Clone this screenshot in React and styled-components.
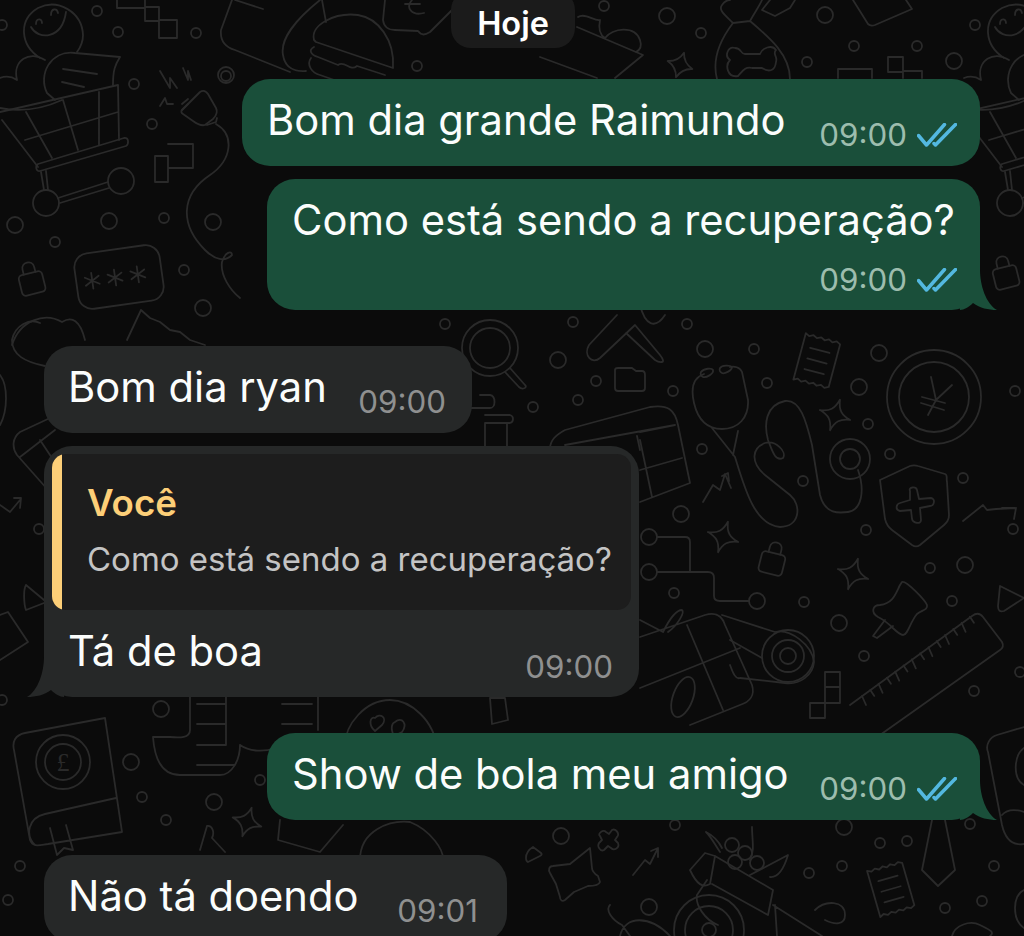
import React from 'react';
import styled, {createGlobalStyle} from 'styled-components';

const GlobalStyle = createGlobalStyle`
  html, body {
    margin: 0;
    padding: 0;
    background: #0b0b0b;
  }
  * {
    box-sizing: border-box;
  }
`;

// pattern of the chat wallpaper, one list per kind of mark
const smallDots = [
  [97,11],[118,32],[2,25],[196,33],[134,84],[226,76],[152,124],[164,218],[55,242],[184,270],
  [604,6],[701,33],[807,62],[854,46],[917,46],[975,25],[417,66],[445,324],[573,322],[687,324],
  [596,381],[578,400],[533,407],[754,349],[767,383],[673,391],[702,449],[868,424],[890,454],
  [803,481],[866,530],[963,478],[1015,391],[1013,529],[930,568],[674,593],[804,602],[952,601],
  [864,656],[974,691],[1020,672],[39,529],[2,700],[142,797],[166,820],[20,866],[8,900],[260,780],
  [880,843],[907,841],[842,866],[809,873],[970,824],[994,866],[982,901],[945,908],[675,825],
];
const bigDots = [
  [15,225],[109,221],[213,222],[203,308],[667,16],[825,15],[954,61],[558,360],[705,349],[879,353],
  [859,387],[681,514],[965,565],[839,623],[161,709],[131,762],[214,802],[561,836],[844,827],[649,907],
  [226,75],
];

const Cart = () => (
  <g>
    <path d="M40 58C20 45 18 20 38 8C58-2 82 12 83 35C83 42 80 48 77 52" />
    <path d="M31 27C38 40 62 40 66 12M36 24C36 18 42 18 42 23M51 15C51 8 57 8 58 13" />
    <path d="M0 78C8 75 14 78 17 80C12 60 30 50 45 60M0 108C20 112 40 110 62 100" />
    <path d="M120 57L75 53C50 50 38 75 47 93L55 100M120 57C115 65 113 70 113 85M63 69L97 74M62 82L84 87" />
    <path d="M0 112L118 85L119 140M2 120L38 167M26 112L52 158M63 100L78 150M99 92L99 145M25 140L118 112" />
    <path d="M38 164L124 138C129 137 129 144 126 146L40 171C36 172 35 166 38 164Z" />
    <path d="M41 172L44 190M46 171L48 190M58 198L108 182M60 203L109 188" />
    <circle cx="46" cy="203" r="13" />
    <circle cx="121" cy="181" r="13" />
  </g>
);

const Sparkle = ({x, y, r = 15}) => (
  <path d={`M${x} ${y - r}C${x + 2} ${y - 6} ${x + 6} ${y - 2} ${x + r} ${y}C${x + 6} ${y + 2} ${x + 2} ${y + 6} ${x} ${y + r}C${x - 2} ${y + 6} ${x - 6} ${y + 2} ${x - r} ${y}C${x - 6} ${y - 2} ${x - 2} ${y - 6} ${x} ${y - r}Z`} transform={`rotate(18 ${x} ${y})`} />
);

const Lock = ({x, y, angle = -14}) => (
  <g transform={`translate(${x} ${y}) rotate(${angle})`}>
    <rect x="-12" y="-10" width="24" height="21" rx="4" />
    <path d="M-6-10V-15C-6-23 6-23 6-15V-10" />
  </g>
);

const Receipt = ({x, y, angle = 15}) => (
  <g transform={`translate(${x} ${y}) rotate(${angle})`}>
    <path d="M-18-24L-14-22L-10-24L-6-22L-2-24L2-22L6-24L10-22L14-24L18-22V22L14 24L10 22L6 24L2 22L-2 24L-6 22L-10 24L-14 22L-18 24Z" />
    <path d="M-10-11H10M-10 0H10M-10 11H10" />
  </g>
);

const Wallpaper = () => (
  <PatternSvg viewBox="0 0 1024 936" aria-hidden="true">
    {smallDots.map(([x, y]) => <circle key={`${x}-${y}`} cx={x} cy={y} r="5" />)}
    {bigDots.map(([x, y]) => <circle key={`${x}-${y}`} cx={x} cy={y} r="8" />)}
    <Cart />
    <g transform="translate(964 0)"><Cart /></g>

    {/* plug and cable */}
    <path d="M182 110L200 92C203 90 206 91 208 94L216 108C218 112 216 116 213 119L205 125C201 126 197 124 193 121L183 114C181 113 181 111 182 110Z" />
    <path d="M207 125L216 122L217 118M182 110L188 104M188 99L182 104M216 124C235 135 232 160 210 175C180 195 180 225 205 250C215 260 225 262 232 255C232 250 225 252 222 262C220 275 230 290 240 298" />
    <path d="M160 71L170 88L170 78L177 88M183 68L188 80L188 71L191 80M160 106L165 98L167 104L173 104" />

    {/* squares */}
    <path d="M117 0V8H145V21H159V38H177V20H159V7H145V0M168 144H193V168H168V156H155V182H168V168" />
    <path d="M888 57H903V72H888ZM903 71H922V78M903 72V78M838 78V69H872V78" />
    <path d="M825 672H840V703H825ZM825 687H840M810 703H825V718H810Z" />

    <g transform="translate(119 277) rotate(-8)">
      <rect x="-43" y="-28" width="86" height="56" rx="14" />
      <path d="M-27-8V8M-34-4L-20 4M-34 4L-20-4M-4-8V8M-11-4L3 4M-11 4L3-4M19-8V8M12-4L26 4M12 4L26-4" />
    </g>
    <Lock x={32} y={283} />
    <Lock x={1006} y={277} />
    <Lock x={772} y={563} angle={14} />

    {/* torn paper under the last outgoing bubble */}
    <path d="M127 340L141 310L150 318L160 322L170 330L180 332L190 340L205 345" />
    <path d="M12 345C20 320 45 312 62 322C72 316 80 320 85 340" />

    {/* left edge */}
    <path d="M40 323C30 318 15 325 12 340C12 355 25 362 45 366M0 375C8 385 8 410 0 425M50 418L20 432C12 438 12 448 17 455L48 490M20 457L55 430M40 440L60 470" />
    <path d="M0 505L10 512L20 500M14 498H21L20 508M26 585L44 600M26 585C23 590 24 605 26 610L44 603M0 615L8 612L28 642L0 660" />

    {/* top row */}
    <path d="M314 40C310 25 335 12 358 15C378 18 395 40 393 68L316 42ZM314 47C308 50 311 55 318 57L338 65C345 60 350 72 357 66L385 75M311 58C306 65 312 73 320 75L380 96" />
    <path d="M320 0C295 20 280 40 283 55C285 68 295 72 306 71M232 0L221 30C220 40 225 47 235 50L290 72M235 0L263 9M322 0L326 22" />
    <path d="M385 0L383 20C384 28 390 30 395 30L418 31C422 36 425 35 430 32L460 2M412 0C405 8 412 16 424 13M405 4H420" />
    <path d="M577 27L643 55L615 78M540 57L597 78M578 17C585 12 595 22 600 20C598 30 600 35 605 38C612 28 635 25 640 40C642 46 640 50 636 52" />
    <path d="M733 23C720 40 712 60 717 79M750 21C770 38 790 55 790 79M733 23L750 21M733 23C725 15 718 10 722 5C724 2 726 0 730 0M750 21C755 12 760 5 762 0" />
    <path d="M735 48C728 46 724 56 730 60C725 65 727 78 738 76C742 72 745 66 752 68H762C768 72 775 72 776 62C778 56 772 54 776 50C772 44 762 48 760 54H745C740 54 742 48 735 48Z" />
    <Sparkle x={680} y={65} r={13} />
    <path d="M853 0L868 24C870 26 872 26 875 25L912 9L906 0M770 0L762 10L775 16L790 8L795 0" />

    {/* middle */}
    <circle cx="490" cy="348" r="28" />
    <circle cx="490" cy="348" r="20" />
    <path d="M510 368L525 385C528 388 522 390 519 387L505 372" />
    <path d="M617 315L589 345C583 355 592 365 600 358L635 325L660 355C668 365 658 362 655 360L626 333M640 305C645 325 655 330 665 315" />
    <path d="M618 368H632L636 371H642C644 371 645 373 645 375V388C645 390 644 391 642 391H618C616 391 615 390 615 388V370C615 369 616 368 618 368Z" />
    <path d="M550 449C550 440 556 435 565 430L650 407C668 404 675 410 678 425L690 483L640 502M565 445L675 425M640 432L675 425M640 470L682 458M652 497L640 440M637 436L640 450" />
    <path d="M480 395H490C496 396 496 408 490 408H470M485 415H510C514 416 514 422 510 423H485M485 423V446M507 423V446" />

    {/* stethoscope */}
    <path d="M704 374C692 378 691 390 694 403C698 420 708 429 722 429C738 429 749 418 748 400L742 372C740 367 734 366 730 367M712 428L735 457M738 431L733 455M735 457C745 490 755 525 780 527C800 527 802 505 790 495L765 475C750 462 752 448 765 443C776 440 787 452 783 458C775 462 772 450 768 440C764 425 765 405 785 401C800 399 806 420 812 445L820 495C825 515 840 513 848 512C862 510 865 490 858 470" />
    <path d="M701 372C704 368 712 368 713 370C714 374 706 378 703 377C701 376 700 374 701 372ZM720 368C722 365 730 365 732 367C732 371 724 374 722 373C720 372 719 370 720 368Z" />
    <circle cx="850" cy="459" r="20" />
    <circle cx="850" cy="459" r="10" />

    <Receipt x={817} y={361} />
    <Receipt x={891} y={889} angle={-16} />

    {/* yen coin */}
    <circle cx="934" cy="397" r="47" />
    <circle cx="934" cy="397" r="35" />
    <path d="M931 377L936 400L928 415M952 385L936 400M922 397L945 403M921 403L944 410" />

    {/* shield */}
    <path d="M880 480L910 466C913 465 915 465 918 466L945 474C948 475 946 478 947 482L949 515C949 520 947 522 944 525L920 545C917 547 915 547 912 545L892 530C888 527 886 523 885 519L880 480Z" />
    <path d="M910 491C908 487 916 486 917 490L919 499L931 498C936 499 934 506 930 506L920 508L921 520C921 525 913 523 912 519L911 510L900 511C895 510 896 504 900 503L910 500Z" />
    <path d="M963 521L983 505L987 510L996 509L1015 508L1002 508M1016 508L1014 519" />
    <path d="M703 502L713 485L720 490L725 474L731 488M722 476L728 473L729 481" />
    <Sparkle x={835} y={415} r={16} />
    <Sparkle x={723} y={537} r={16} />
    <Sparkle x={853} y={574} r={16} />
    <Sparkle x={247} y={822} r={15} />

    {/* circuit */}
    <circle cx="649" cy="537" r="8" />
    <circle cx="649" cy="572" r="8" />
    <circle cx="757" cy="601" r="8" />
    <path d="M657 537H685C688 537 690 539 690 542V572M657 572H708C712 572 714 574 714 578V596C714 599 716 601 720 601H749" />

    {/* pin */}
    <path d="M902 582C906 580 925 600 927 605C928 610 922 610 917 614C910 622 908 635 903 635C897 635 890 622 878 617C870 612 873 605 880 605C893 603 895 595 900 585ZM885 620L873 636L877 638L893 626" />
    <path d="M1000 586L1024 598L1004 611C1000 612 998 611 998 606Z" />

    {/* ruler */}
    <path d="M850 705L972 616C976 613 980 613 983 617L1002 642C1004 646 1003 648 1000 650L880 735" />
    {Array.from({length: 14}, (_, i) => {
      const x = 862 + i * 8.3;
      const y = 696 - i * 6.1;
      return <path key={i} d={`M${x} ${y}L${x + 4} ${y + (i % 2 ? 6 : 9)}`} />;
    })}

    {/* gift and tape */}
    <path d="M640 637L705 615C715 612 722 615 725 625L752 685C755 695 750 702 740 705L690 725M687 625L723 710M640 688L740 648M663 632C668 622 675 610 682 610C685 612 678 625 668 632M640 620L663 632" />
    <ellipse cx="683" cy="697" rx="10" ry="21" transform="rotate(20 683 697)" />
    <path d="M722 615L775 632C790 628 812 645 814 662C813 675 800 685 785 683L740 678C735 680 732 670 730 665M730 640L762 658" />
    <circle cx="788" cy="656" r="26" />
    <circle cx="788" cy="656" r="16" />
    <circle cx="788" cy="656" r="8" />

    {/* book */}
    <path d="M105 718L25 733C15 735 12 742 14 750L30 840C33 848 40 845 48 844L122 832L105 718ZM116 798L45 814C28 818 25 835 35 845M50 828L57 855L64 848L73 850L66 825" />
    <circle cx="63" cy="762" r="27" />
    <circle cx="63" cy="762" r="18" />
    <PoundMark x="63" y="771">£</PoundMark>

    {/* scroll */}
    <path d="M153 737C155 765 165 775 180 775H220C232 775 240 760 240 745M190 697V730C190 738 180 738 170 737H153M197 704H225M197 724H225M197 745H225M197 765H235M226 697V745M282 704H312M282 724H312M318 697V730M240 745C250 752 265 752 275 748" />
    <path d="M345 745C345 725 365 700 390 700C410 700 435 720 437 750M375 718C380 712 388 718 382 725L375 731C368 725 370 716 375 718ZM395 722C402 716 408 724 402 732L394 736C390 728 392 723 395 722Z" />
    <path d="M490 698H505L508 720L492 724Z" />
    <path d="M280 820L278 840L320 852L343 825M360 860C360 830 390 820 410 822C430 830 445 850 443 862M200 850L207 826C212 825 215 832 212 838L225 852" />

    {/* star, arrow and barrow */}
    <path d="M590 848L592 868C592 872 595 874 598 876L600 882C599 885 594 886 588 886L574 892L565 900C562 902 560 900 560 897L556 884L550 873C548 870 549 866 553 866L570 864Z" />
    <path d="M533 847L541 853C542 854 542 855 540 856L528 862C527 862 526 860 526 858C526 854 528 850 533 847Z" />
    <path d="M600 836C597 834 603 829 606 832L609 834L612 830C616 828 620 834 617 837L615 840L618 843C620 848 614 851 611 848L608 846L604 850C600 852 597 846 599 843L602 840Z" />
    <path d="M633 875L645 860L650 864L657 850M651 851L658 848L658 857" />
    <path d="M690 870L705 853L715 856L710 884C703 888 697 885 690 870ZM715 856L773 890L768 915L712 884M707 880L697 895C695 905 705 920 718 925M720 852C715 845 712 838 706 832C712 835 718 840 722 848M750 860C755 850 752 840 752 827M770 877C780 878 785 865 788 855L750 875" />
    <circle cx="732" cy="845" r="7" />
    <circle cx="745" cy="853" r="7" />
    <circle cx="757" cy="863" r="7" />
    <circle cx="735" cy="862" r="7" />
    <circle cx="709" cy="930" r="35" />
    <circle cx="709" cy="930" r="24" />
    <circle cx="709" cy="930" r="7" />
    <path d="M773 905L822 936M775 905L777 936M815 910C825 900 845 900 845 915C845 925 835 925 825 920M620 936C625 915 650 915 670 936M610 905C605 910 612 920 622 925L630 936" />

    {/* tie and right book */}
    <path d="M932 820L922 870L938 886L955 870L945 820" />
    <path d="M1024 727L997 735C990 737 985 745 988 752L1002 825C1005 838 1012 846 1024 844M1002 815C1008 808 1018 810 1024 812M1024 748C1014 755 1012 778 1024 785" />
    <path d="M952 936C955 925 970 920 980 925C990 930 995 932 990 936M1024 890C1012 895 1012 920 1024 928" />
  </PatternSvg>
);

const Ticks = () => (
  <TickSvg viewBox="0 0 40 24">
    <path d="M1.5 12.5L9.5 22L27.5 1.5M17 20.5L18.5 22L38.5 1.5" />
  </TickSvg>
);

const Tail = ({color, $out}) => (
  <TailSvg viewBox="0 0 40 40" $out={$out}>
    <path d="M0 0H20C20 15 26 34 37 40C28 40 20 38 13 33C9 37 4 40 0 40Z" fill={color} />
  </TailSvg>
);

const Meta = ({time, out, $stacked}) => (
  <MetaRow $stacked={$stacked}>
    <Time $out={out}>{time}</Time>
    {out && <Ticks />}
  </MetaRow>
);

const App = () => (
  <Screen>
    <GlobalStyle />
    <Wallpaper />
    <Thread>
      <DatePill>Hoje</DatePill>

      <Bubble $out $top={31} $width={738}>
        <Line>
          <Text>Bom dia grande Raimundo</Text>
          <Meta time="09:00" out />
        </Line>
      </Bubble>

      <Bubble $out $top={13} $width={713} $stacked>
        <Text>Como está sendo a recuperação?</Text>
        <Meta time="09:00" out $stacked />
        <Tail color="#1a4f3a" $out />
      </Bubble>

      <Bubble $top={36} $width={428}>
        <Line>
          <Text>Bom dia ryan</Text>
          <Meta time="09:00" />
        </Line>
      </Bubble>

      <ReplyBubble>
        <Quote>
          <QuoteBar />
          <QuoteBody>
            <QuoteAuthor>Você</QuoteAuthor>
            <QuoteText>Como está sendo a recuperação?</QuoteText>
          </QuoteBody>
        </Quote>
        <ReplyLine>
          <Text>Tá de boa</Text>
          <Meta time="09:00" />
        </ReplyLine>
        <Tail color="#262828" />
      </ReplyBubble>

      <Bubble $out $top={36} $width={713}>
        <Line>
          <Text>Show de bola meu amigo</Text>
          <Meta time="09:00" out />
        </Line>
        <Tail color="#1a4f3a" $out />
      </Bubble>

      <Bubble $top={35} $width={463} $right={29}>
        <Line>
          <Text>Não tá doendo</Text>
          <Meta time="09:01" />
        </Line>
      </Bubble>
    </Thread>
  </Screen>
);

export default App;

const Screen = styled.div`
  position: relative;
  width: 1024px;
  height: 936px;
  overflow: hidden;
  background: #0b0b0b;
  font-family: Inter, "Noto Sans", sans-serif;
`;

const PatternSvg = styled.svg`
  position: absolute;
  inset: 0;
  width: 1024px;
  height: 936px;
  fill: none;
  stroke: #2a2a2a;
  stroke-width: 1.8;
  stroke-linecap: round;
  stroke-linejoin: round;
`;

const PoundMark = styled.text`
  fill: #2a2a2a;
  stroke: none;
  font-family: "Liberation Serif", serif;
  font-size: 26px;
  text-anchor: middle;
`;

const Thread = styled.div`
  position: relative;
  display: flex;
  flex-direction: column;
  align-items: flex-start;
  padding: 0 44px;
`;

const DatePill = styled.div`
  align-self: flex-start;
  margin: -10px 0 0 407px;
  width: 124px;
  height: 58px;
  padding-top: 10px;
  border-radius: 20px;
  background: #1b1b1b;
  color: #fff;
  font-size: 32.5px;
  font-weight: 600;
  line-height: 48px;
  text-align: center;
`;

const Bubble = styled.div`
  position: relative;
  flex: none;
  display: flex;
  flex-direction: column;
  align-self: ${p => (p.$out ? 'flex-end' : 'flex-start')};
  margin-top: ${p => p.$top}px;
  width: ${p => p.$width}px;
  padding: 18px ${p => p.$right || (p.$out ? 23 : 26)}px 23px ${p => (p.$out ? 25 : 24)}px;
  border-radius: 28px;
  background: ${p => (p.$out ? '#1a4f3a' : '#262828')};
  ${p => p.$stacked && 'padding-bottom: 15px;'}
`;

const Line = styled.div`
  display: flex;
  justify-content: space-between;
  gap: 20px;
  height: 46px;
`;

const Text = styled.span`
  color: #fbfdfc;
  font-size: 41.7px;
  line-height: 46px;
  white-space: nowrap;
`;

const MetaRow = styled.div`
  display: flex;
  align-items: center;
  justify-content: flex-end;
  gap: 10px;
  height: 30px;
  margin-top: ${p => (p.$stacked ? '22px' : '23px')};
`;

const Time = styled.span`
  color: ${p => (p.$out ? '#9dbdae' : '#8f9090')};
  font-size: 31.3px;
  line-height: 30px;
  white-space: nowrap;
`;

const TickSvg = styled.svg`
  flex: none;
  width: 40px;
  height: 24px;
  fill: none;
  stroke: #53b8e0;
  stroke-width: 3.5;
  stroke-linecap: round;
  stroke-linejoin: round;
`;

const TailSvg = styled.svg`
  position: absolute;
  bottom: 0;
  width: 40px;
  height: 40px;
  ${p => (p.$out ? 'right: -20px;' : 'left: -20px; transform: scaleX(-1);')}
`;

const ReplyBubble = styled.div`
  position: relative;
  flex: none;
  width: 595px;
  height: 251px;
  margin-top: 13px;
  padding: 8px;
  border-radius: 28px;
  background: #262828;
`;

const Quote = styled.div`
  display: flex;
  height: 156px;
  border-radius: 14px;
  overflow: hidden;
  background: #1d1d1d;
`;

const QuoteBar = styled.div`
  flex: none;
  width: 10px;
  background: #fdcf78;
`;

const QuoteBody = styled.div`
  padding: 29px 0 0 25px;
`;

const QuoteAuthor = styled.div`
  color: #fdcf78;
  font-size: 36.7px;
  font-weight: 600;
  line-height: 40px;
`;

const QuoteText = styled.div`
  margin-top: 18px;
  color: #c4c4c4;
  font-size: 33px;
  line-height: 36px;
  white-space: nowrap;
`;

const ReplyLine = styled(Line)`
  padding: 18px 18px 0 16px;
  height: auto;

  ${MetaRow} {
    margin-top: 24px;
  }
`;
